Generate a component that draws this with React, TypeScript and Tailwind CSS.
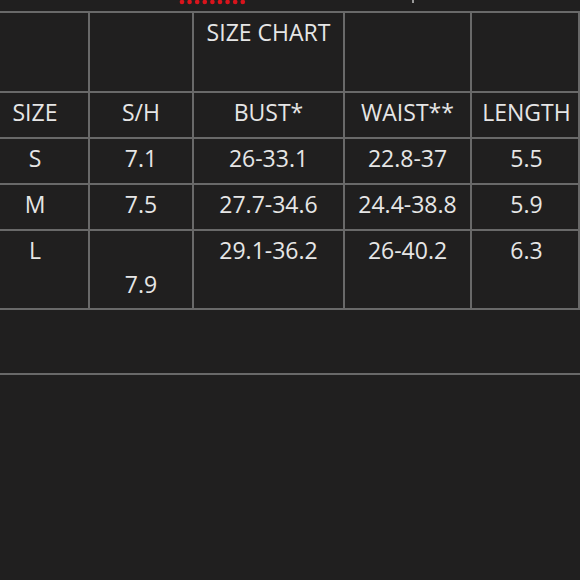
const widths = ["w-[90px] pr-[18px]", "w-[104px]", "w-[151px]", "w-[127px]", "flex-1 pl-[3px] border-r-0"]

const rows: { h: string; cells: string[][] }[] = [
  { h: "h-[80px]", cells: [[], [], ["SIZE CHART"], [], []] },
  { h: "h-[46px]", cells: [["SIZE"], ["S/H"], ["BUST*"], ["WAIST**"], ["LENGTH"]] },
  { h: "h-[46px]", cells: [["S"], ["7.1"], ["26-33.1"], ["22.8-37"], ["5.5"]] },
  { h: "h-[46px]", cells: [["M"], ["7.5"], ["27.7-34.6"], ["24.4-38.8"], ["5.9"]] },
  { h: "h-[79px]", cells: [["L"], ["", "7.9"], ["29.1-36.2"], ["26-40.2"], ["6.3"]] },
]

function Squiggle() {
  return (
    <svg width="70" height="5" viewBox="0 0 70 5" className="ml-[178px]">
      {Array.from({ length: 9 }).map((_, i) => (
        <circle key={i} cx={4 + i * 7.6} cy={2} r={2.3} fill="#d8141c" />
      ))}
    </svg>
  )
}

export default function App() {
  return (
    <div className="w-[580px] h-[580px] overflow-hidden bg-[#201f1f] text-[#e6e6e6] text-[23px] leading-[34px]" style={{ fontFamily: '"Open Sans", "Noto Sans", sans-serif' }}>
      <div className="h-[11px] flex items-start relative">
        <Squiggle />
        <div className="absolute left-[412px] top-0 w-[2px] h-[3px] bg-[#9a9a9a]" />
      </div>
      <div className="border-t-2 border-[#696969]">
        {rows.map((row, r) => (
          <div key={r} className={`flex ${row.h} border-b-2 border-[#696969]`}>
            {row.cells.map((lines, c) => (
              <div key={c} className={`${widths[c]} shrink-0 border-r-2 border-[#696969] pt-[2px] text-center`}>
                {lines.map((t, i) => (
                  <div key={i} className="h-[34px] whitespace-nowrap">{t}</div>
                ))}
              </div>
            ))}
          </div>
        ))}
        <div className="h-[65px] border-b-2 border-[#696969]" />
      </div>
    </div>
  )
}
